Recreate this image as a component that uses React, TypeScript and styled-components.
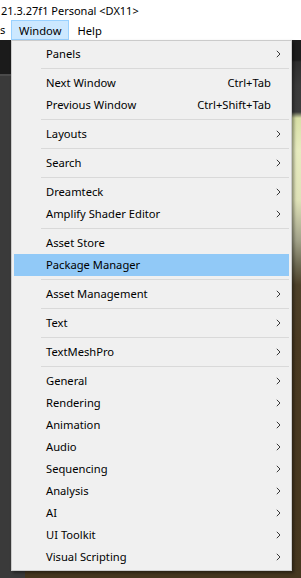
import styled, { createGlobalStyle } from 'styled-components'

const GlobalStyle = createGlobalStyle`
  html, body {
    margin: 0;
    padding: 0;
    background: #ffffff;
  }
  body {
    font-family: "Noto Sans", "Liberation Sans", sans-serif;
  }
`

type Entry = { label: string; shortcut?: string; sub?: boolean; active?: boolean } | 'sep'

const entries: Entry[] = [
  { label: 'Panels', sub: true },
  'sep',
  { label: 'Next Window', shortcut: 'Ctrl+Tab' },
  { label: 'Previous Window', shortcut: 'Ctrl+Shift+Tab' },
  'sep',
  { label: 'Layouts', sub: true },
  'sep',
  { label: 'Search', sub: true },
  'sep',
  { label: 'Dreamteck', sub: true },
  { label: 'Amplify Shader Editor', sub: true },
  'sep',
  { label: 'Asset Store' },
  { label: 'Package Manager', active: true },
  'sep',
  { label: 'Asset Management', sub: true },
  'sep',
  { label: 'Text', sub: true },
  'sep',
  { label: 'TextMeshPro', sub: true },
  'sep',
  { label: 'General', sub: true },
  { label: 'Rendering', sub: true },
  { label: 'Animation', sub: true },
  { label: 'Audio', sub: true },
  { label: 'Sequencing', sub: true },
  { label: 'Analysis', sub: true },
  { label: 'AI', sub: true },
  { label: 'UI Toolkit', sub: true },
  { label: 'Visual Scripting', sub: true },
]

export default function App() {
  return (
    <>
      <GlobalStyle />
      <Page>
        <TitleBar>21.3.27f1 Personal &lt;DX11&gt;</TitleBar>
        <MenuBar>
          <CutItem>s</CutItem>
          <MenuBarItem $open>Window</MenuBarItem>
          <MenuBarItem>Help</MenuBarItem>
        </MenuBar>
        <Editor>
          <Menu>
            {entries.map((e, i) =>
              e === 'sep' ? (
                <Separator key={i}>
                  <Line />
                </Separator>
              ) : (
                <Row key={i} $active={e.active}>
                  <Label>{e.label}</Label>
                  {e.shortcut && <Shortcut>{e.shortcut}</Shortcut>}
                  <ArrowSlot>{e.sub && <Chevron />}</ArrowSlot>
                </Row>
              ),
            )}
          </Menu>
        </Editor>
      </Page>
    </>
  )
}

function Chevron() {
  return (
    <svg width="5" height="8" viewBox="0 0 5 8">
      <polyline points="0.8,0.8 4,4 0.8,7.2" fill="none" stroke="#3a3a3a" strokeWidth="1" />
    </svg>
  )
}

const Page = styled.div`
  width: 301px;
  height: 578px;
  display: flex;
  flex-direction: column;
  overflow: hidden;
`

const TitleBar = styled.div`
  height: 20px;
  display: flex;
  align-items: center;
  padding-left: 1px;
  font-size: 11px;
  color: #000;
  white-space: nowrap;
`

const MenuBar = styled.div`
  height: 20px;
  display: flex;
  align-items: center;
  font-size: 11.2px;
  color: #000;
`

const CutItem = styled.div`
  width: 11px;
  line-height: 18px;
`

const MenuBarItem = styled.div<{ $open?: boolean }>`
  height: 18px;
  display: flex;
  align-items: center;
  padding: 0 7px;
  border: 1px solid ${p => (p.$open ? '#99d1ff' : 'transparent')};
  background: ${p => (p.$open ? '#cce8ff' : 'transparent')};
`

const Editor = styled.div`
  flex: 1;
  padding-left: 11px;
  background:
    linear-gradient(#1b1b1b 0 34px, #4a4a4a 34px 36px, #3a3a3a 36px) left top / 25px 100% no-repeat,
    linear-gradient(
      #1d1d1d 0,
      #1d1d1d 20px,
      #2e2e2e 22px,
      #3a3a3a 45px,
      #3c3c3c 72px,
      #d8dfa6 78px,
      #e7ebbf 110px,
      #dfe2b8 160px,
      #a3a38a 200px,
      #6e6a52 225px,
      #4e4129 245px,
      #4a3a22 300px,
      #46371f 100%
    );
`

const Menu = styled.div`
  width: 281px;
  box-sizing: border-box;
  background: #f0f0f0;
  border: 1px solid #cbcbcb;
  padding: 2px;
  box-shadow: 2px 2px 3px rgba(0, 0, 0, 0.4);
`

const Row = styled.div<{ $active?: boolean }>`
  height: 22px;
  box-sizing: border-box;
  display: flex;
  align-items: center;
  padding: 0 8px 1px 32px;
  font-size: 11.2px;
  color: #000;
  background: ${p => (p.$active ? '#91c9f7' : 'transparent')};
  white-space: nowrap;
`

const Label = styled.span`
  flex: 1;
`

const Shortcut = styled.span`
  margin-right: 5px;
`

const ArrowSlot = styled.span`
  width: 5px;
  height: 8px;
  display: flex;
`

const Separator = styled.div`
  height: 7px;
  display: flex;
  align-items: center;
  padding-left: 27px;
`

const Line = styled.div`
  flex: 1;
  height: 1px;
  background: #d9d9d9;
`
